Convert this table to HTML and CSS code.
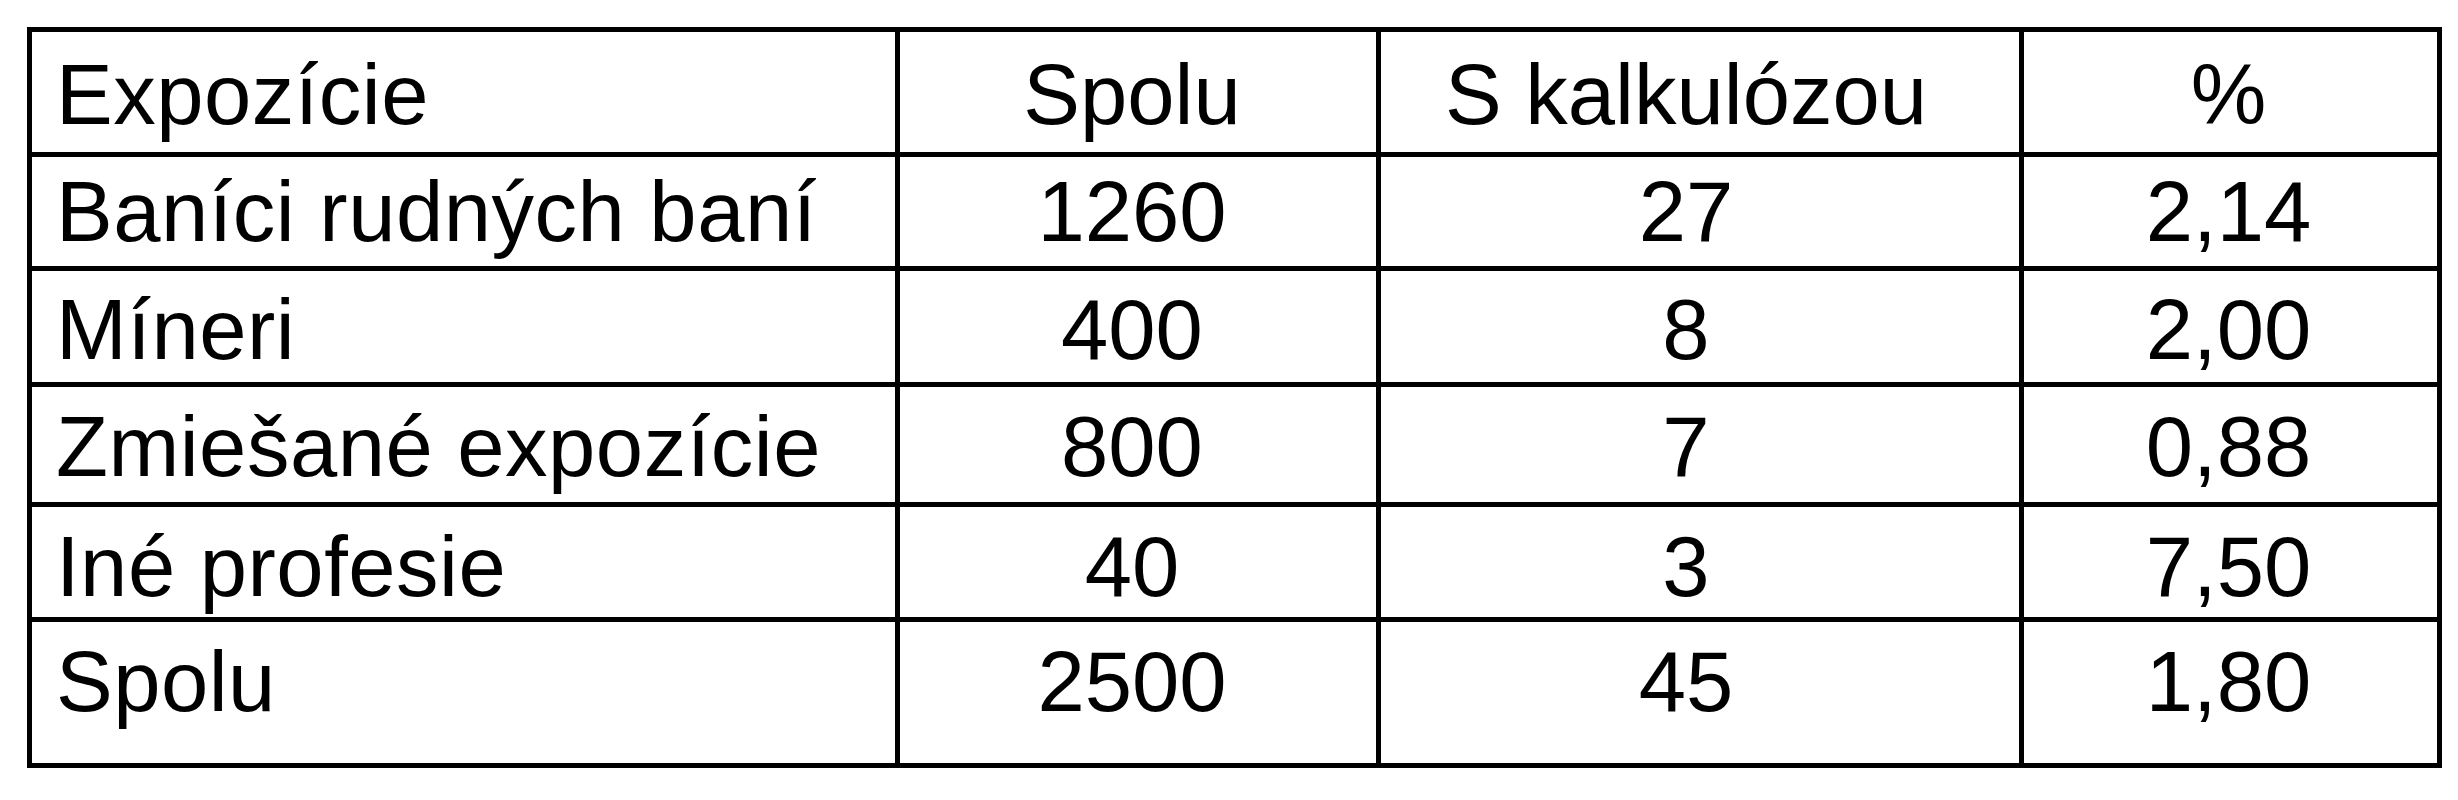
FILE: index.html
```html
<!DOCTYPE html>
<html lang="sk">
<head>
<meta charset="utf-8">
<title>Expozície</title>
<link rel="stylesheet" href="styles.css">
</head>
<body>
<main class="page">
  <table class="data">
    <colgroup>
      <col class="col-name">
      <col class="col-total">
      <col class="col-calc">
      <col class="col-pct">
    </colgroup>
    <thead>
      <tr class="row row-head">
        <th class="cell name">Expozície</th>
        <th class="cell total">Spolu</th>
        <th class="cell calc">S kalkulózou</th>
        <th class="cell pct">%</th>
      </tr>
    </thead>
    <tbody>
      <tr class="row row-1">
        <td class="cell name">Baníci rudných baní</td>
        <td class="cell total">1260</td>
        <td class="cell calc">27</td>
        <td class="cell pct">2,14</td>
      </tr>
      <tr class="row row-2">
        <td class="cell name">Míneri</td>
        <td class="cell total">400</td>
        <td class="cell calc">8</td>
        <td class="cell pct">2,00</td>
      </tr>
      <tr class="row row-3">
        <td class="cell name">Zmiešané expozície</td>
        <td class="cell total">800</td>
        <td class="cell calc">7</td>
        <td class="cell pct">0,88</td>
      </tr>
      <tr class="row row-4">
        <td class="cell name">Iné profesie</td>
        <td class="cell total">40</td>
        <td class="cell calc">3</td>
        <td class="cell pct">7,50</td>
      </tr>
      <tr class="row row-5">
        <td class="cell name">Spolu</td>
        <td class="cell total">2500</td>
        <td class="cell calc">45</td>
        <td class="cell pct">1,80</td>
      </tr>
    </tbody>
  </table>
</main>
</body>
</html>
```
FILE: styles.css
```css
html, body {
  margin: 0;
  padding: 0;
  background: #ffffff;
}

.page {
  padding: 27px 0 0 27px;
}

.data {
  table-layout: fixed;
  width: 2415px;
  border-collapse: separate;
  border-spacing: 5px;
  background: #000000;
  font-family: "Liberation Sans", Arial, Helvetica, sans-serif;
  font-size: 85px;
  line-height: 85px;
  color: #000000;
}

.col-name { width: 863px; }
.col-total { width: 476px; }
.col-calc { width: 638px; }
.col-pct { width: 413px; }

.cell {
  background: #ffffff;
  font-weight: normal;
  padding: 0;
  white-space: nowrap;
  vertical-align: top;
  text-align: center;
}

.cell.name {
  text-align: left;
  padding-left: 24px;
  letter-spacing: 0.5px;
}

.cell.total { padding-right: 12px; }
.cell.calc { padding-right: 28px; }
.cell.pct { padding-right: 4px; }

.row-head .cell { padding-top: 20px; padding-bottom: 15px; }
.row-1 .cell { padding-top: 12px; padding-bottom: 12px; }
.row-2 .cell { padding-top: 16px; padding-bottom: 10px; }
.row-3 .cell { padding-top: 17px; padding-bottom: 13px; }
.row-4 .cell { padding-top: 17px; padding-bottom: 8px; }
.row-5 .cell { padding-top: 17px; padding-bottom: 39px; }
```
